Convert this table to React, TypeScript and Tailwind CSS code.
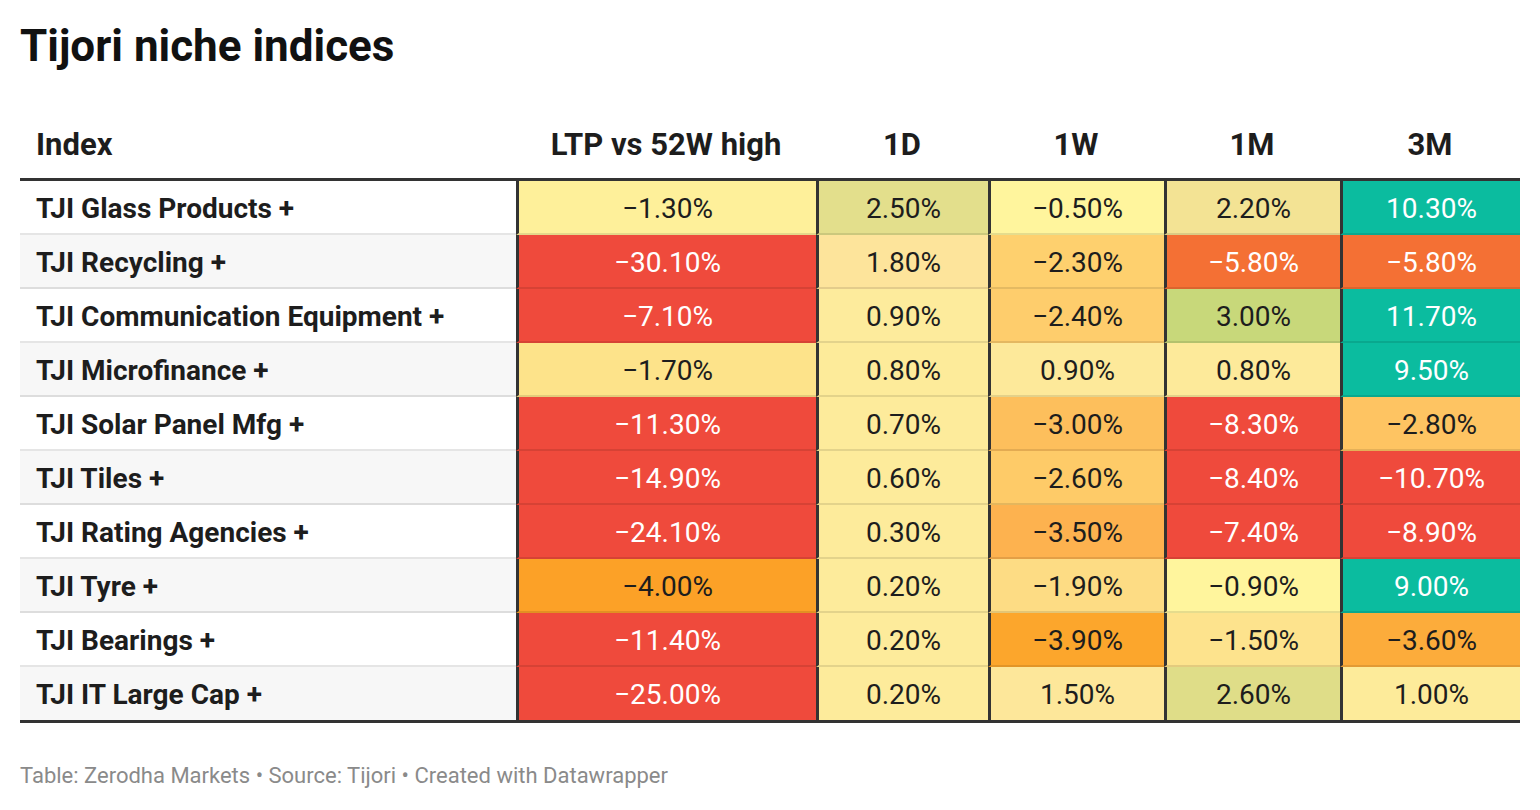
import React from "react";

type Cell = { v: string; c: string };

const R = "bg-[#ef4a3c] text-white";
const T = "bg-[#0bbc9f] text-white";
const O = "bg-[#f47034] text-white";

const rows: { name: string; cells: Cell[] }[] = [
  {
    name: "TJI Glass Products +",
    cells: [
      { v: "−1.30%", c: "bg-[#fef09a] text-[#1d1d1d]" },
      { v: "2.50%", c: "bg-[#e3df8c] text-[#1d1d1d]" },
      { v: "−0.50%", c: "bg-[#fff59d] text-[#1d1d1d]" },
      { v: "2.20%", c: "bg-[#f3e394] text-[#1d1d1d]" },
      { v: "10.30%", c: T },
    ],
  },
  {
    name: "TJI Recycling +",
    cells: [
      { v: "−30.10%", c: R },
      { v: "1.80%", c: "bg-[#fde49b] text-[#1d1d1d]" },
      { v: "−2.30%", c: "bg-[#fed06e] text-[#1d1d1d]" },
      { v: "−5.80%", c: O },
      { v: "−5.80%", c: O },
    ],
  },
  {
    name: "TJI Communication Equipment +",
    cells: [
      { v: "−7.10%", c: R },
      { v: "0.90%", c: "bg-[#fdeb9c] text-[#1d1d1d]" },
      { v: "−2.40%", c: "bg-[#fecd6c] text-[#1d1d1d]" },
      { v: "3.00%", c: "bg-[#c8d87a] text-[#1d1d1d]" },
      { v: "11.70%", c: T },
    ],
  },
  {
    name: "TJI Microfinance +",
    cells: [
      { v: "−1.70%", c: "bg-[#fde38a] text-[#1d1d1d]" },
      { v: "0.80%", c: "bg-[#fdeb9a] text-[#1d1d1d]" },
      { v: "0.90%", c: "bg-[#fde99a] text-[#1d1d1d]" },
      { v: "0.80%", c: "bg-[#fdea9a] text-[#1d1d1d]" },
      { v: "9.50%", c: T },
    ],
  },
  {
    name: "TJI Solar Panel Mfg +",
    cells: [
      { v: "−11.30%", c: R },
      { v: "0.70%", c: "bg-[#fdeb9b] text-[#1d1d1d]" },
      { v: "−3.00%", c: "bg-[#fdbf5c] text-[#1d1d1d]" },
      { v: "−8.30%", c: R },
      { v: "−2.80%", c: "bg-[#fec462] text-[#1d1d1d]" },
    ],
  },
  {
    name: "TJI Tiles +",
    cells: [
      { v: "−14.90%", c: R },
      { v: "0.60%", c: "bg-[#fdeb9b] text-[#1d1d1d]" },
      { v: "−2.60%", c: "bg-[#fecb68] text-[#1d1d1d]" },
      { v: "−8.40%", c: R },
      { v: "−10.70%", c: R },
    ],
  },
  {
    name: "TJI Rating Agencies +",
    cells: [
      { v: "−24.10%", c: R },
      { v: "0.30%", c: "bg-[#fdeb9b] text-[#1d1d1d]" },
      { v: "−3.50%", c: "bg-[#fdb24f] text-[#1d1d1d]" },
      { v: "−7.40%", c: R },
      { v: "−8.90%", c: R },
    ],
  },
  {
    name: "TJI Tyre +",
    cells: [
      { v: "−4.00%", c: "bg-[#fca127] text-[#1d1d1d]" },
      { v: "0.20%", c: "bg-[#fdeb9b] text-[#1d1d1d]" },
      { v: "−1.90%", c: "bg-[#fddc84] text-[#1d1d1d]" },
      { v: "−0.90%", c: "bg-[#fff59d] text-[#1d1d1d]" },
      { v: "9.00%", c: T },
    ],
  },
  {
    name: "TJI Bearings +",
    cells: [
      { v: "−11.40%", c: R },
      { v: "0.20%", c: "bg-[#fdeb9b] text-[#1d1d1d]" },
      { v: "−3.90%", c: "bg-[#fca62c] text-[#1d1d1d]" },
      { v: "−1.50%", c: "bg-[#fde38d] text-[#1d1d1d]" },
      { v: "−3.60%", c: "bg-[#fcac3b] text-[#1d1d1d]" },
    ],
  },
  {
    name: "TJI IT Large Cap +",
    cells: [
      { v: "−25.00%", c: R },
      { v: "0.20%", c: "bg-[#fdeb9b] text-[#1d1d1d]" },
      { v: "1.50%", c: "bg-[#fde79a] text-[#1d1d1d]" },
      { v: "2.60%", c: "bg-[#dfdd88] text-[#1d1d1d]" },
      { v: "1.00%", c: "bg-[#fdeb9a] text-[#1d1d1d]" },
    ],
  },
];

const widths = ["w-[300px]", "w-[172px]", "w-[176px]", "w-[176px]", "w-[180px]"];
const heads = ["LTP vs 52W high", "1D", "1W", "1M", "3M"];

export default function App() {
  return (
    <div
      className="w-[1540px] h-[810px] bg-white px-[20px] pt-[24px] overflow-hidden"
      style={{ fontFamily: "Roboto, 'Liberation Sans', sans-serif" }}
    >
      <h1 className="text-[44px] leading-[44px] font-bold text-[#111]">Tijori niche indices</h1>

      <div className="mt-[40px] w-[1500px]">
        <div className="flex h-[73px] pt-[4px] items-center border-b-[3px] border-[#333] text-[31px] font-bold text-[#1d1d1d]">
          <div className="w-[496px] pl-[16px]">Index</div>
          {heads.map((h, i) => (
            <div key={h} className={`${widths[i]} text-center`}>
              {h}
            </div>
          ))}
        </div>

        <div className="border-b-[3px] border-[#333]">
          {rows.map((r, ri) => {
            const last = ri === rows.length - 1;
            return (
              <div
                key={r.name}
                className={`flex ${last ? "h-[53px]" : "h-[54px]"} text-[28px]`}
              >
                <div
                  className={`w-[496px] pl-[16px] pt-[3px] flex items-center font-bold text-[#1d1d1d] ${
                    ri % 2 === 1 ? "bg-[#f7f7f7]" : "bg-white"
                  } ${last ? "" : "border-b-2 border-b-black/10"}`}
                >
                  {r.name}
                </div>
                {r.cells.map((c, ci) => (
                  <div
                    key={ci}
                    className={`${widths[ci]} border-l-[3px] border-l-[#333] ${c.c} pt-[3px] flex items-center justify-center ${
                      last ? "" : "border-b-2 border-b-black/10"
                    }`}
                  >
                    {c.v}
                  </div>
                ))}
              </div>
            );
          })}
        </div>
      </div>

      <div className="mt-[40px] text-[22px] leading-[26px] text-[#8a8a8a]">
        Table: Zerodha Markets • Source: Tijori • Created with Datawrapper
      </div>
    </div>
  );
}
